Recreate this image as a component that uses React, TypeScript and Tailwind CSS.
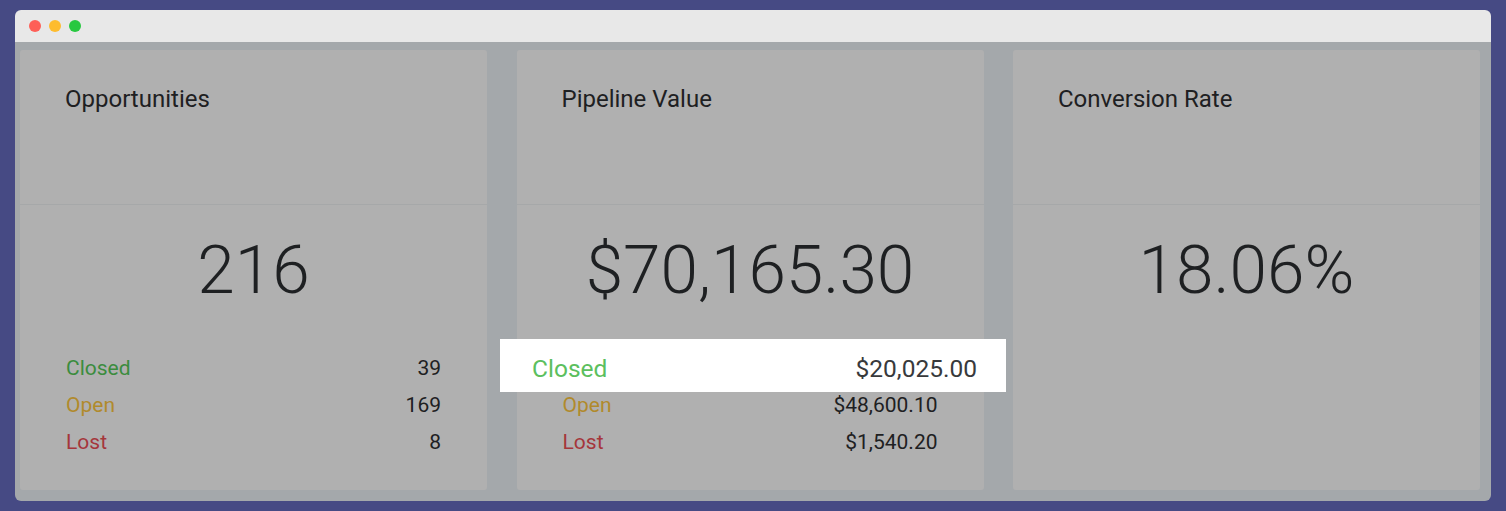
import React from 'react';

interface Row {
  label: string;
  value: string;
  color: string;
}

interface Metric {
  title: string;
  value: string;
  rows: Row[];
}

const metrics: Metric[] = [
  {
    title: 'Opportunities',
    value: '216',
    rows: [
      { label: 'Closed', value: '39', color: 'text-[#3b8c3e]' },
      { label: 'Open', value: '169', color: 'text-[#b08a2c]' },
      { label: 'Lost', value: '8', color: 'text-[#a5363b]' },
    ],
  },
  {
    title: 'Pipeline Value',
    value: '$70,165.30',
    rows: [
      { label: 'Closed', value: '$20,025.00', color: 'text-[#3b8c3e]' },
      { label: 'Open', value: '$48,600.10', color: 'text-[#b08a2c]' },
      { label: 'Lost', value: '$1,540.20', color: 'text-[#a5363b]' },
    ],
  },
  {
    title: 'Conversion Rate',
    value: '18.06%',
    rows: [],
  },
];

const MetricCard: React.FC<{ metric: Metric }> = ({ metric }) => (
  <div className="flex flex-col rounded-[3px] bg-[#b0b0b0]">
    <div className="h-[155px] border-b border-[#a6a8a9] px-[45px] pt-[35px]">
      <h2 className="text-[24px] leading-[28px] text-[#1e2022]">{metric.title}</h2>
    </div>
    <div className="flex-1 pt-[30px]">
      <div className="text-center text-[67.5px] font-light leading-[70px] text-[#1e2022]">{metric.value}</div>
      <div className="mt-[45px] px-[46px]">
        {metric.rows.map(row => (
          <div key={row.label} className="flex h-[37px] items-center justify-between text-[21px]">
            <span className={row.color}>{row.label}</span>
            <span className="text-[#1e2022]">{row.value}</span>
          </div>
        ))}
      </div>
    </div>
  </div>
);

export default function App() {
  return (
    <div className="relative h-[511px] w-full bg-[#464a84] px-[15px] pt-[10px] pb-[10px] font-['Roboto',sans-serif]">
      <div className="flex h-full flex-col overflow-hidden rounded-[6px]">
        <div className="flex h-[32px] items-center gap-[8px] bg-[#e8e8e8] pl-[14px]">
          <span className="h-[12px] w-[12px] rounded-full bg-[#fe5f57]" />
          <span className="h-[12px] w-[12px] rounded-full bg-[#febc2e]" />
          <span className="h-[12px] w-[12px] rounded-full bg-[#28c840]" />
        </div>
        <div className="grid flex-1 grid-cols-3 gap-x-[29.5px] bg-[#a4a8ab] pt-[8px] pr-[11px] pb-[11px] pl-[5px]">
          {metrics.map(m => (
            <MetricCard key={m.title} metric={m} />
          ))}
        </div>
      </div>

      {/* highlighted row */}
      <div className="absolute top-[339px] left-[500px] flex h-[53px] w-[506px] items-center justify-between bg-white pt-[7px] pr-[29px] pl-[32px] text-[24.5px]">
        <span className="text-[#5cbf5e]">Closed</span>
        <span className="text-[#383a3c]">$20,025.00</span>
      </div>
    </div>
  );
}
